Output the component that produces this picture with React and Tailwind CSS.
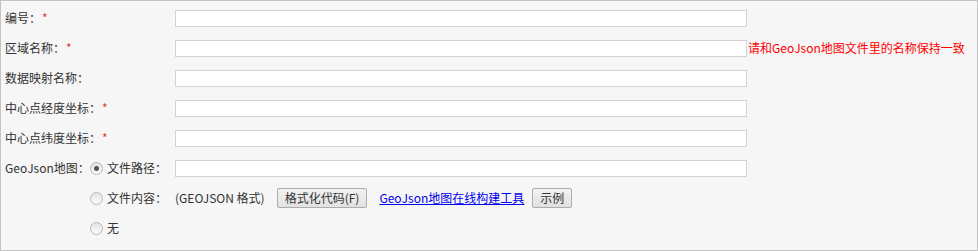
import React from 'react';

const font = { fontFamily: '"Noto Sans CJK SC", "Noto Sans", sans-serif' };

const Req = () => <span className="text-[#e4393c] ml-[1px]">*</span>;

const TextInput = () => (
  <input
    type="text"
    className="w-[572px] h-[17px] bg-white border border-[#d3d3d3] outline-none"
  />
);

const Radio = ({ checked }) => (
  <span className="w-[13px] h-[13px] rounded-full border border-[#b5b5b5] bg-gradient-to-b from-[#e4e4e4] to-[#fbfbfb] flex items-center justify-center shrink-0 mr-[4px]">
    {checked && <span className="w-[5px] h-[5px] rounded-full bg-[#555]"></span>}
  </span>
);

const Btn = ({ children }) => (
  <button className="h-[20px] px-[7px] text-[12px] leading-none text-[#333] border border-[#acacac] rounded-[2px] bg-gradient-to-b from-[#f2f2f2] to-[#e1e1e1]">
    {children}
  </button>
);

const Row = ({ label, children }) => (
  <div className="flex items-center h-[30px]">
    <div className="w-[174px] pl-[4px] flex items-center shrink-0">{label}</div>
    {children}
  </div>
);

export default function App() {
  return (
    <div
      className="w-[978px] h-[251px] bg-[#f6f6f6] border border-[#c3c3c3] pt-[2px] text-[12px] text-[#333]"
      style={font}
    >
      <Row label={<span>编号：<Req /></span>}>
        <TextInput />
      </Row>
      <Row label={<span>区域名称：<Req /></span>}>
        <TextInput />
        <span className="text-[#ff0000] ml-[1px]">请和GeoJson地图文件里的名称保持一致</span>
      </Row>
      <Row label={<span>数据映射名称：</span>}>
        <TextInput />
      </Row>
      <Row label={<span>中心点经度坐标：<Req /></span>}>
        <TextInput />
      </Row>
      <Row label={<span>中心点纬度坐标：<Req /></span>}>
        <TextInput />
      </Row>
      <Row
        label={
          <>
            <span className="w-[85px]">GeoJson地图：</span>
            <Radio checked />
            <span>文件路径：</span>
          </>
        }
      >
        <TextInput />
      </Row>
      <Row
        label={
          <>
            <span className="w-[85px]"></span>
            <Radio />
            <span>文件内容：</span>
          </>
        }
      >
        <span>(GEOJSON 格式)</span>
        <span className="ml-[12px]">
          <Btn>格式化代码(F)</Btn>
        </span>
        <a href="#" className="ml-[12px] text-[#0000ee] underline">
          GeoJson地图在线构建工具
        </a>
        <span className="ml-[8px]">
          <Btn>示例</Btn>
        </span>
      </Row>
      <Row
        label={
          <>
            <span className="w-[85px]"></span>
            <Radio />
            <span>无</span>
          </>
        }
      />
    </div>
  );
}
